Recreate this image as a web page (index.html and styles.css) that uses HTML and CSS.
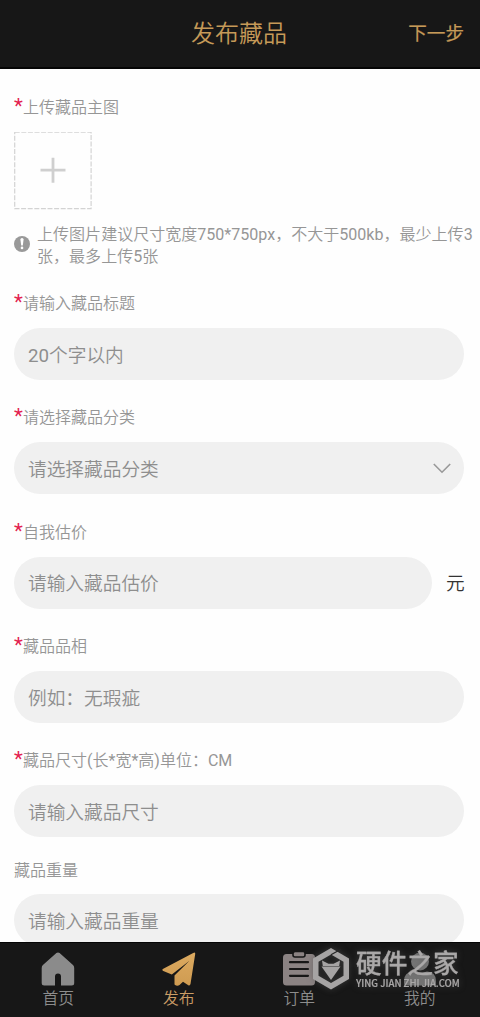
FILE: index.html
```html
<!DOCTYPE html>
<html lang="zh-CN">
<head>
<meta charset="utf-8">
<title>发布藏品</title>
<link rel="stylesheet" href="styles.css">
</head>
<body>
<div class="app">
  <header class="header">
    <h1 class="title">发布藏品</h1>
    <a class="next">下一步</a>
  </header>
  <main class="form">
    <section class="upload">
      <div class="label"><span class="star">*</span>上传藏品主图</div>
      <div class="uploader">
        <svg width="78" height="78" viewBox="0 0 78 78" fill="none">
          <rect x=".7" y=".2" width="76.4" height="76.4" stroke="#d3d3d3" stroke-width="1.2" stroke-dasharray="5 1.6"/>
          <path d="M39 25.700v25M26.500 38.200h25" stroke="#cfcfcf" stroke-width="2.800"/>
        </svg>
      </div>
      <div class="hint">
        <svg class="hint-icon" width="16" height="16" viewBox="0 0 16 16">
          <circle cx="8" cy="8" r="8" fill="#999"/>
          <path d="M6.4 3.6a1.6 1.6 0 0 1 3.2 0L8.8 9.4H7.2z" fill="#fff"/>
          <circle cx="8" cy="11.9" r="1.3" fill="#fff"/>
        </svg>
        <p class="hint-text">上传图片建议尺寸宽度<span class="latin">750*750px</span>，不大于<span class="latin">500kb</span>，最少上传<span class="latin">3</span><br>张，最多上传<span class="latin">5</span>张</p>
      </div>
    </section>
    <section class="group">
      <div class="label"><span class="star">*</span>请输入藏品标题</div>
      <div class="field"><span><span class="latin">20</span>个字以内</span></div>
    </section>
    <section class="group">
      <div class="label"><span class="star">*</span>请选择藏品分类</div>
      <div class="field select">请选择藏品分类
        <svg width="18" height="11" viewBox="0 0 18 11" fill="none"><path d="M.8 1L9 9.2 17.2 1" stroke="#999" stroke-width="1.6"/></svg>
      </div>
    </section>
    <section class="group">
      <div class="label"><span class="star">*</span>自我估价</div>
      <div class="row"><div class="field grow">请输入藏品估价</div><span class="unit">元</span></div>
    </section>
    <section class="group">
      <div class="label"><span class="star">*</span>藏品品相</div>
      <div class="field">例如：无瑕疵</div>
    </section>
    <section class="group">
      <div class="label"><span class="star">*</span><span>藏品尺寸<span class="latin">(</span>长<span class="latin">*</span>宽<span class="latin">*</span>高<span class="latin">)</span>单位：<span class="latin">CM</span></span></div>
      <div class="field">请输入藏品尺寸</div>
    </section>
    <section class="group weight">
      <div class="label">藏品重量</div>
      <div class="field">请输入藏品重量</div>
    </section>
  </main>
  <nav class="tabs">
    <a class="tab">
      <svg width="34" height="34" viewBox="0 0 34 34"><path d="M15.4 1.1q1.6-1.4 3.2 0L32 13q1.2 1.2 1.2 3v15q0 2.500-2.500 2.500H20V24.500a3 3 0 0 0-6 0v9H3.200Q.7 33.500.7 31V16q0-1.800 1.200-3z" fill="#8b8b8b"/></svg>
      <span>首页</span>
    </a>
    <a class="tab active">
      <svg width="34" height="34" viewBox="0 0 34 34">
        <defs><linearGradient id="gold" x1="0" y1="0" x2="0" y2="1"><stop offset="0" stop-color="#dcaa60"/><stop offset="1" stop-color="#cf9b51"/></linearGradient></defs>
        <path d="M31.200.9Q33.500-.4 33.200 2L28.500 32q-.5 2-2.200 1.200L21 29.800l-3.500 3.300q-2.500 1.500-5-.7V23.500L27.500 8.700 9.800 22.500 1.300 19Q-.6 17.800 1.300 16.700z" fill="url(#gold)"/>
      </svg>
      <span>发布</span>
    </a>
    <a class="tab">
      <svg width="34" height="34" viewBox="0 0 34 34"><rect x="1" y="2" width="32" height="31.500" rx="3.500" fill="#8b8383"/><rect x="11" y="-.5" width="12" height="5.500" rx="2" fill="#8b8383" stroke="#171717" stroke-width="1.600"/><path d="M8 10.200h18M8 17h18M8 23.800h18" stroke="#171717" stroke-width="2.200" stroke-linecap="round"/></svg>
      <span>订单</span>
    </a>
    <a class="tab">
      <svg width="34" height="34" viewBox="0 0 34 34"><circle cx="17" cy="9.500" r="9" fill="#777"/><path d="M1 29q0-9 9-9.500l7 2 7-2q9 .5 9 9.500v2q0 2.500-2.500 2.500h-27Q1 33.500 1 31z" fill="#777"/></svg>
      <span>我的</span>
    </a>
  </nav>
  <div class="mark">
    <svg width="38" height="44" viewBox="0 0 38 44">
      <path d="M19 1L37 11.500V32L19 42.500 1 32V11.500zM19 7.500L6.500 14.700V28.800L19 36 31.500 28.800V14.700z" fill="#a6a4a4" fill-rule="evenodd"/>
      <path d="M10 13.500l6.500 3.300h5l6.500-3.300-.8 5.500H10.800zM9.500 19.600h19L19 33z" fill="#a6a4a4"/>
      <path d="M19 7.800L28.500 2.500" stroke="#252525" stroke-width="1.300" fill="none"/>
    </svg>
    <div class="mark-text"><div class="mark-name">硬件之家</div><div class="mark-site">YING JIAN ZHI JIA.COM</div></div>
  </div>
</div>
</body>
</html>
```
FILE: styles.css
```css
* { box-sizing: border-box; }
body {
  margin: 0;
  background: #fefefe;
  font-family: Roboto, "Noto Sans CJK SC", sans-serif;
  font-weight: 350;
}
.app {
  position: relative;
  display: flex;
  flex-direction: column;
  width: 480px;
  height: 1017px;
  overflow: hidden;
}
.latin { font-weight: 400; }
.header {
  display: grid;
  grid-template-columns: 1fr auto 1fr;
  align-items: center;
  flex: none;
  height: 69px;
  padding: 1px 16px 0 14px;
  background: #171717;
  border-bottom: 2px solid #050505;
  color: #c59a58;
}
.title { grid-column: 2; margin: 0; font-size: 24px; font-weight: 350; line-height: 36px; }
.next { justify-self: end; font-size: 18.600px; font-weight: 400; line-height: 28px; -webkit-text-stroke: .2px; }
.form { flex: 1; min-height: 0; overflow: hidden; padding: 26px 0 0 14px; color: #969696; }
.label { height: 24px; line-height: 26px; font-size: 16px; white-space: nowrap; display: flex; }
.star { width: 9px; font-size: 20.500px; line-height: 22px; font-weight: 400; color: #e3224f; }
.uploader { height: 78px; margin-top: 12.500px; }
.uploader svg { display: block; }
.hint { display: flex; align-items: center; gap: 7px; margin-top: 14.500px; height: 43px; }
.hint-icon { flex: none; margin-bottom: 4px; }
.hint-text { margin: 0; font-size: 16.050px; line-height: 21.500px; white-space: nowrap; }
.upload { height: 196px; }
.group { height: 114.350px; }
.group .field { margin-top: 13px; }
.field {
  display: flex;
  align-items: center;
  width: 450px;
  height: 52px;
  padding: 0 14px 2px;
  border-radius: 26px;
  background: #f0f0f0;
  color: #8e8e8e;
  font-size: 18.700px;
}
.select { justify-content: space-between; padding-right: 13px; }
.select svg { position: relative; top: 1px; }
.row { display: flex; }
.row .grow { width: 418px; }
.unit { margin: 14px 0 0 14px; font-size: 18.700px; line-height: 52px; color: #333; }
.weight { margin-top: -4.300px; }
.weight .field { margin-top: 12px; padding-bottom: 1px; }
.tabs {
  display: grid;
  grid-template-columns: repeat(4, 120.500px);
  flex: none;
  height: 75px;
  margin-left: -2px;
  background: #171717;
  border-top: 1px solid #050505;
  color: #8d8d8d;
}
.tab { display: flex; flex-direction: column; align-items: center; padding-top: 9px; font-size: 15.800px; font-weight: 350; line-height: 24px; }
.tab svg { flex: none; overflow: visible; }
.tab span { margin-top: 1px; }
.active { color: #cb9d66; }
.mark {
  position: absolute;
  left: 312px;
  top: 947px;
  display: flex;
  gap: 6px;
  color: #aaa8a8;
  filter: drop-shadow(0 0 3px #55555599);
}
.mark-name { font-size: 25.700px; line-height: 34px; font-weight: 500; -webkit-text-stroke: .3px; white-space: nowrap; }
.mark-site { margin-top: -4px; font-family: "Noto Sans CJK SC", sans-serif; font-size: 9.600px; line-height: 12px; font-weight: 500; -webkit-text-stroke: .2px; white-space: nowrap; }
```
